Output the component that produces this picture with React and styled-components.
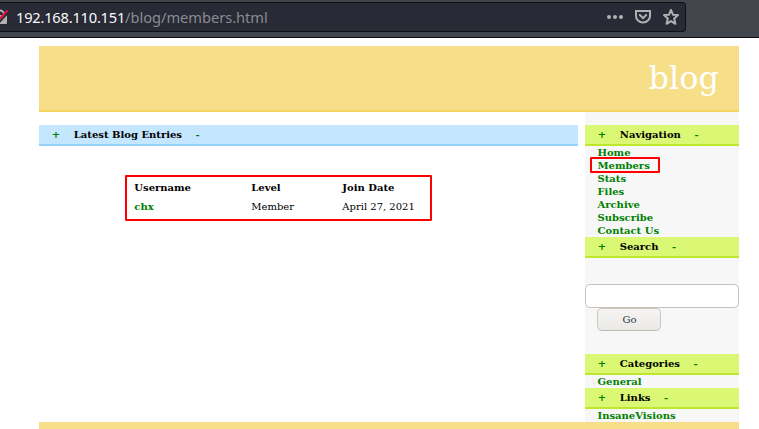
import React from "react";
import styled, { createGlobalStyle } from "styled-components";

const Global = createGlobalStyle`
  * { box-sizing: border-box; }
  html, body { margin: 0; padding: 0; overflow: hidden; background: #fff; }
`;

const Window = styled.div`
  width: 759px;
  height: 429px;
  overflow: hidden;
  font: 10px/13px "DejaVu Serif", serif;
  color: #000;
`;

const Toolbar = styled.div`
  height: 38px;
  padding-top: 2px;
  background: #42454c;
  border-bottom: 1px solid #0c0c0d;
`;

const UrlBar = styled.div`
  display: flex;
  align-items: center;
  width: 686px;
  height: 30px;
  padding-right: 6px;
  background: #282a36;
  border: 1px solid #0f1014;
  border-left: 0;
  border-radius: 0 4px 4px 0;
`;

const LockIcon = styled.svg`
  flex: none;
  width: 16px;
  height: 28px;
`;

const Url = styled.div`
  flex: 1;
  font: 14.67px/28px "Noto Sans", sans-serif;
  color: #8a8b90;
  white-space: nowrap;
  letter-spacing: -0.04px;
`;

const Host = styled.span`
  color: #f9f9fa;
  letter-spacing: -0.22px;
`;

const Actions = styled.div`
  display: flex;
  gap: 12px;
  svg { display: block; width: 16px; height: 16px; }
`;

const Page = styled.div`
  width: 700px;
  margin: 8px 0 0 39px;
`;

const Banner = styled.header`
  height: 66px;
  padding: 13px 20px 0 0;
  background: #f7de89;
  border-bottom: 2px solid #f4d361;
  color: #fff;
  font-size: 32px;
  line-height: 38px;
  text-align: right;
`;

const Columns = styled.div`
  display: flex;
  justify-content: space-between;
  height: 310px;
`;

const Main = styled.main`
  width: 539px;
  padding-top: 13px;
`;

const Sidebar = styled.aside`
  width: 154px;
  padding-top: 13px;
  background: #f7f7f7;
`;

const Heading = styled.h2`
  display: flex;
  gap: 13.6px;
  height: 21px;
  margin: 0;
  padding: 3px 12.8px 0;
  font-size: 10px;
  line-height: 13px;
  font-weight: bold;
  background: ${(p) => (p.$blue ? "#c4e6ff" : "#daf874")};
  border-bottom: 2px solid ${(p) => (p.$blue ? "#94d2fc" : "#bde72f")};
`;

const Toggle = styled.span`
  color: #008000;
`;

const Links = styled.nav`
  display: flex;
  flex-direction: column;
  padding-left: 12.5px;
`;

const NavLink = styled.a`
  position: relative;
  height: 13px;
  color: #008000;
  font-weight: bold;
`;

const Marker = styled.span`
  position: absolute;
  left: -7.5px;
  top: -2px;
  width: 70px;
  height: 16px;
  border: 2px solid #f00;
  border-radius: 1px;
`;

const SearchForm = styled.form`
  height: 96px;
  padding-top: 26px;
`;

const SearchInput = styled.input`
  display: block;
  width: 154px;
  height: 24px;
  padding: 0 6px;
  background: #fff;
  border: 1px solid #c8c2bc;
  border-radius: 5px;
  outline: 0;
`;

const GoButton = styled.button`
  display: block;
  width: 64px;
  height: 23px;
  margin-left: 12px;
  padding: 0 0 1px 1px;
  font: 10px "DejaVu Serif", serif;
  color: #2e3436;
  background: linear-gradient(#f6f5f4, #ebe9e7);
  border: 1px solid #cdc7c2;
  border-bottom-color: #bfb8b1;
  border-radius: 5px;
`;

const Members = styled.div`
  display: grid;
  grid-template-columns: 117px 91px 1fr;
  grid-auto-rows: 19px;
  width: 307px;
  height: 46px;
  margin: 29px 0 0 86px;
  padding: 2px 0 0 7.3px;
  line-height: 17px;
  border: 2px solid #f00;
  border-radius: 1px;
`;

const Cell = styled.div`
  font-weight: ${(p) => (p.$bold ? "bold" : "normal")};
  color: ${(p) => (p.$link ? "#008000" : "#000")};
  white-space: nowrap;
`;

const Footer = styled.footer`
  height: 20px;
  background: #f7de89;
`;

function Title({ children, blue }) {
  return (
    <Heading $blue={blue}>
      <Toggle>+</Toggle>
      <span>{children}</span>
      <Toggle>-</Toggle>
    </Heading>
  );
}

const navigation = ["Home", "Members", "Stats", "Files", "Archive", "Subscribe", "Contact Us"];

export default function App() {
  return (
    <>
      <Global />
      <Window>
        <Toolbar>
          <UrlBar>
            <LockIcon viewBox="0 0 16 28">
              <path d="M-4 13V11.500a3.500 3.500 0 0 1 8 0V13" fill="none" stroke="#b1b1b3" strokeWidth="2" />
              <rect x="-7" y="12" width="14" height="9" rx="1" fill="#b1b1b3" />
              <path d="M-3.500 22L9.500 8" stroke="#282a36" strokeWidth="2" />
              <path d="M-5.500 21.500L7.500 7.500" stroke="#e8103c" strokeWidth="2" />
            </LockIcon>
            <Url><Host>192.168.110.151</Host>/blog/members.html</Url>
            <Actions>
              <svg viewBox="0 0 16 16" fill="#b1b1b3">
                <circle cx="2" cy="8" r="2" />
                <circle cx="8" cy="8" r="2" />
                <circle cx="14" cy="8" r="2" />
              </svg>
              <svg viewBox="0 0 16 16" fill="none" stroke="#b1b1b3" strokeWidth="2" strokeLinecap="round">
                <path d="M1 2h14V7a7 6.500 0 0 1-14 0z" />
                <path d="M4.800 6l3.200 3.200L11.200 6" />
              </svg>
              <svg viewBox="0 0 16 16" fill="none" stroke="#b1b1b3" strokeWidth="2" strokeLinejoin="round">
                <path d="M8 1l2 4.700 5 .4-3.800 3.500 1.200 5.200L8 12.100l-4.400 2.700 1.200-5.200L1 6.100l5-.4z" />
              </svg>
            </Actions>
          </UrlBar>
        </Toolbar>
        <Page>
          <Banner>blog</Banner>
          <Columns>
            <Main>
              <Title blue>Latest Blog Entries</Title>
              <Members>
                <Cell $bold>Username</Cell>
                <Cell $bold>Level</Cell>
                <Cell $bold>Join Date</Cell>
                <Cell $bold $link>chx</Cell>
                <Cell>Member</Cell>
                <Cell>April 27, 2021</Cell>
              </Members>
            </Main>
            <Sidebar>
              <Title>Navigation</Title>
              <Links>
                {navigation.map((name) => (
                  <NavLink key={name}>
                    {name}
                    {name === "Members" && <Marker />}
                  </NavLink>
                ))}
              </Links>
              <Title>Search</Title>
              <SearchForm>
                <SearchInput aria-label="Search" />
                <GoButton type="button">Go</GoButton>
              </SearchForm>
              <Title>Categories</Title>
              <Links><NavLink>General</NavLink></Links>
              <Title>Links</Title>
              <Links><NavLink>InsaneVisions</NavLink></Links>
            </Sidebar>
          </Columns>
          <Footer />
        </Page>
      </Window>
    </>
  );
}
